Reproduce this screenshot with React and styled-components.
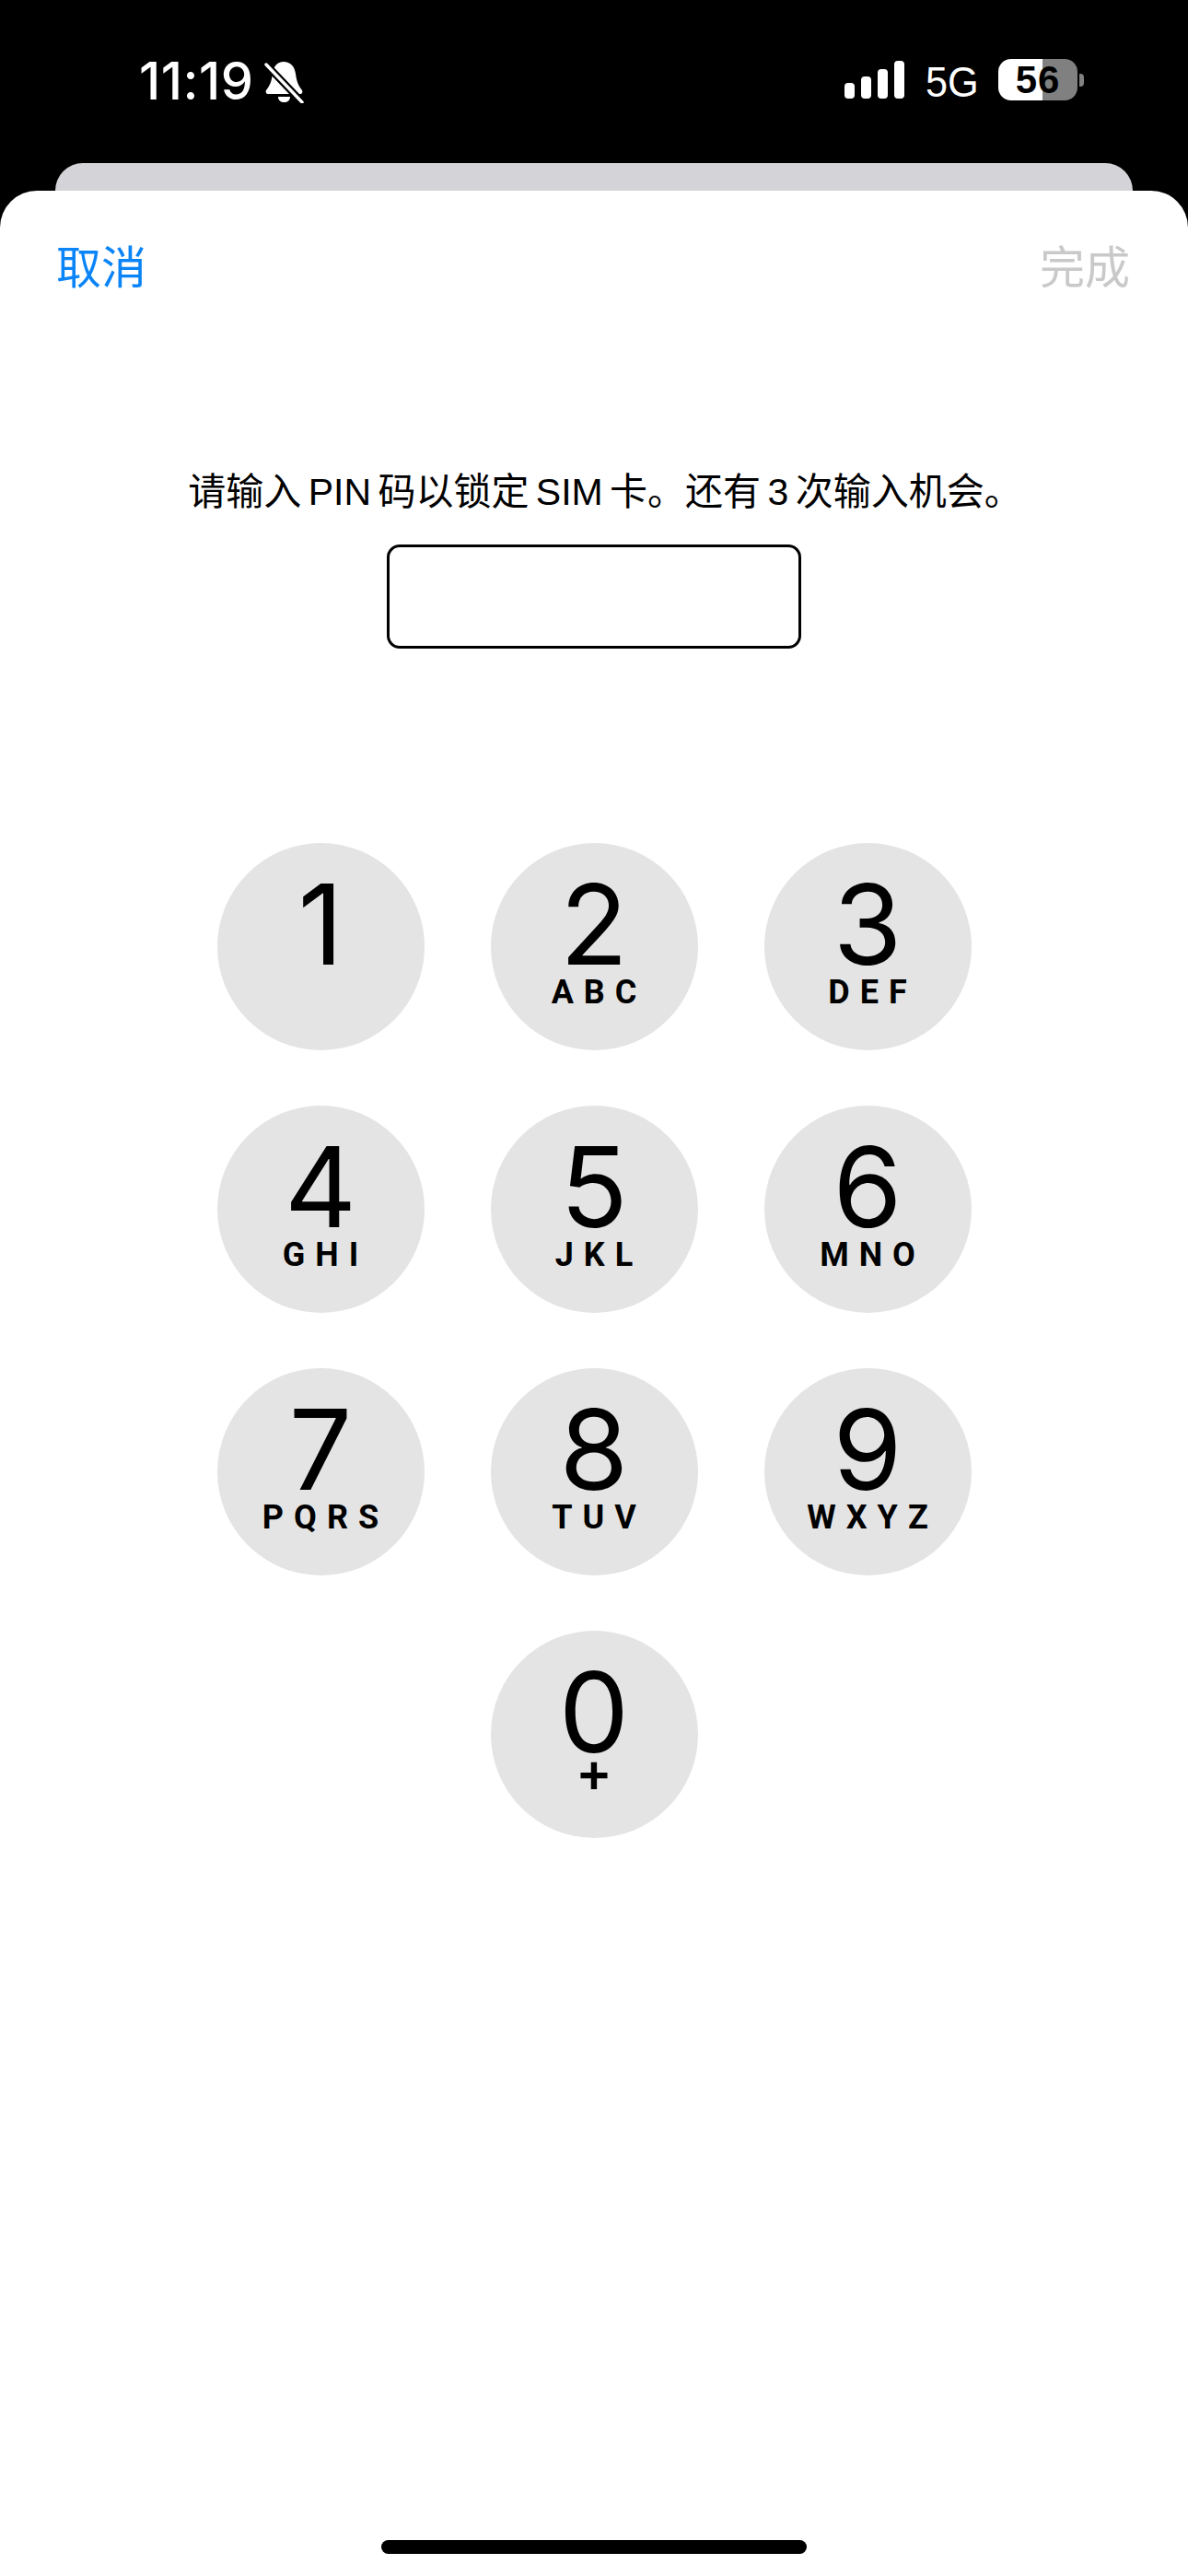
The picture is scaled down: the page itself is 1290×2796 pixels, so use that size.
import styled, { createGlobalStyle } from "styled-components"

const GlobalStyle = createGlobalStyle`
    html, body {
        margin: 0;
        padding: 0;
        background: #000;
    }
    * {
        box-sizing: border-box;
    }
`

const keys = [
    { digit: "1", letters: "" },
    { digit: "2", letters: "ABC" },
    { digit: "3", letters: "DEF" },
    { digit: "4", letters: "GHI" },
    { digit: "5", letters: "JKL" },
    { digit: "6", letters: "MNO" },
    { digit: "7", letters: "PQRS" },
    { digit: "8", letters: "TUV" },
    { digit: "9", letters: "WXYZ" },
]

function BellOff() {
    return (
        <svg width="44" height="46" viewBox="0 0 44 46">
            <path fill="#fff" d="M21 1c7 0 12 5 13 13 1 8 3 13 7 18 1 2 0 4-2 4H4c-2 0-3-2-2-4 4-5 6-10 7-18 1-8 5-13 12-13z" />
            <path fill="#fff" d="M15 39h13c0 4-3 6-6.5 6S15 43 15 39z" />
            <path stroke="#000" strokeWidth="8" d="M0 2l42 44" />
            <path stroke="#fff" strokeWidth="3.4" strokeLinecap="round" d="M2 4l39 41" />
        </svg>
    )
}

export default function App() {
    return (
        <Screen>
            <GlobalStyle />
            <StatusBar>
                <StatusLeft>
                    <Time>11:19</Time>
                    <BellOff />
                </StatusLeft>
                <StatusRight>
                    <Signal>
                        <Bar $h={17} />
                        <Bar $h={24} />
                        <Bar $h={32} />
                        <Bar $h={41} />
                    </Signal>
                    <Network>5G</Network>
                    <Battery>
                        <BatteryBody>56</BatteryBody>
                        <BatteryNub />
                    </Battery>
                </StatusRight>
            </StatusBar>
            <BackSheet />
            <Sheet>
                <Nav>
                    <NavButton $color="#0a84f6">取消</NavButton>
                    <NavButton $color="#c9c9c9">完成</NavButton>
                </Nav>
                <Prompt>请输入 PIN 码以锁定 SIM 卡。还有 3 次输入机会。</Prompt>
                <PinBox />
                <Keypad>
                    {keys.map(key => (
                        <Key key={key.digit}>
                            <Digit>{key.digit}</Digit>
                            <Letters>{key.letters}</Letters>
                        </Key>
                    ))}
                    <ZeroKey>
                        <Digit>0</Digit>
                        <Plus>+</Plus>
                    </ZeroKey>
                </Keypad>
                <HomeBar />
            </Sheet>
        </Screen>
    )
}

const Screen = styled.div`
    width: 1290px;
    height: 2796px;
    background: #000;
    display: flex;
    flex-direction: column;
    overflow: hidden;
    font-family: "Liberation Sans", "Noto Sans CJK SC", sans-serif;
`

const StatusBar = styled.div`
    height: 177px;
    padding: 64px 113px 0 151px;
    display: flex;
    justify-content: space-between;
    align-items: flex-start;
    color: #fff;
`

const StatusLeft = styled.div`
    display: flex;
    align-items: flex-start;
    gap: 12px;
    svg {
        margin-top: 2px;
    }
`

const Time = styled.div`
    font-family: "Inter", sans-serif;
    font-size: 56px;
    font-weight: 500;
    line-height: 48px;
    letter-spacing: 0.5px;
`

const StatusRight = styled.div`
    display: flex;
    align-items: flex-start;
`

const Signal = styled.div`
    display: flex;
    align-items: flex-end;
    gap: 7px;
    height: 41px;
    margin-top: 2px;
`

const Bar = styled.div`
    width: 11px;
    height: ${p => p.$h}px;
    background: #fff;
    border-radius: 4px;
`

const Network = styled.div`
    width: 56px;
    margin-left: 23px;
    font-size: 46px;
    line-height: 50px;
    white-space: nowrap;
    transform: scaleX(0.94);
    transform-origin: left center;
`

const Battery = styled.div`
    display: flex;
    align-items: center;
    gap: 2px;
    margin-left: 23px;
`

const BatteryBody = styled.div`
    width: 86px;
    height: 45px;
    border-radius: 14px;
    background: linear-gradient(to right, #fff 48px, #808080 48px);
    color: #000;
    font-size: 42px;
    font-weight: 700;
    line-height: 45px;
    text-align: center;
    letter-spacing: 1px;
`

const BatteryNub = styled.div`
    width: 5px;
    height: 14px;
    background: #808080;
    border-radius: 0 4px 4px 0;
`

const BackSheet = styled.div`
    height: 30px;
    margin: 0 60px;
    background: #d4d4d8;
    border-radius: 30px 30px 0 0;
`

const Sheet = styled.div`
    flex: 1;
    background: #fff;
    border-radius: 40px 40px 0 0;
    display: flex;
    flex-direction: column;
    align-items: center;
`

const Nav = styled.div`
    width: 100%;
    padding: 54px 63px 0 61px;
    display: flex;
    justify-content: space-between;
`

const NavButton = styled.div`
    color: ${p => p.$color};
    font-size: 49px;
    line-height: 60px;
`

const Prompt = styled.div`
    margin-top: 185px;
    padding-left: 24px;
    color: #000;
    font-size: 41px;
    line-height: 56px;
    word-spacing: -4px;
    white-space: nowrap;
`

const PinBox = styled.div`
    width: 450px;
    height: 113px;
    margin-top: 29px;
    border: 3px solid #000;
    border-radius: 14px;
`

const Keypad = styled.div`
    margin-top: 211px;
    display: grid;
    grid-template-columns: repeat(3, 225px);
    grid-auto-rows: 225px;
    gap: 60px 72px;
`

const Key = styled.div`
    background: #e4e4e4;
    border-radius: 50%;
    color: #000;
    display: flex;
    flex-direction: column;
    align-items: center;
    padding-top: 34px;
`

const ZeroKey = styled(Key)`
    grid-column: 2;
`

const Digit = styled.div`
    font-family: "Inter", sans-serif;
    font-size: 121px;
    font-weight: 400;
    line-height: 108px;
`

const Letters = styled.div`
    font-family: "Roboto", sans-serif;
    font-size: 36px;
    font-weight: 700;
    line-height: 36px;
    letter-spacing: 11px;
    margin-right: -11px;
    margin-top: 2px;
`

const Plus = styled.div`
    font-size: 58px;
    font-weight: 700;
    line-height: 36px;
    margin-top: -3px;
`

const HomeBar = styled.div`
    width: 462px;
    height: 15px;
    margin-top: auto;
    margin-bottom: 24px;
    background: #000;
    border-radius: 8px;
`
